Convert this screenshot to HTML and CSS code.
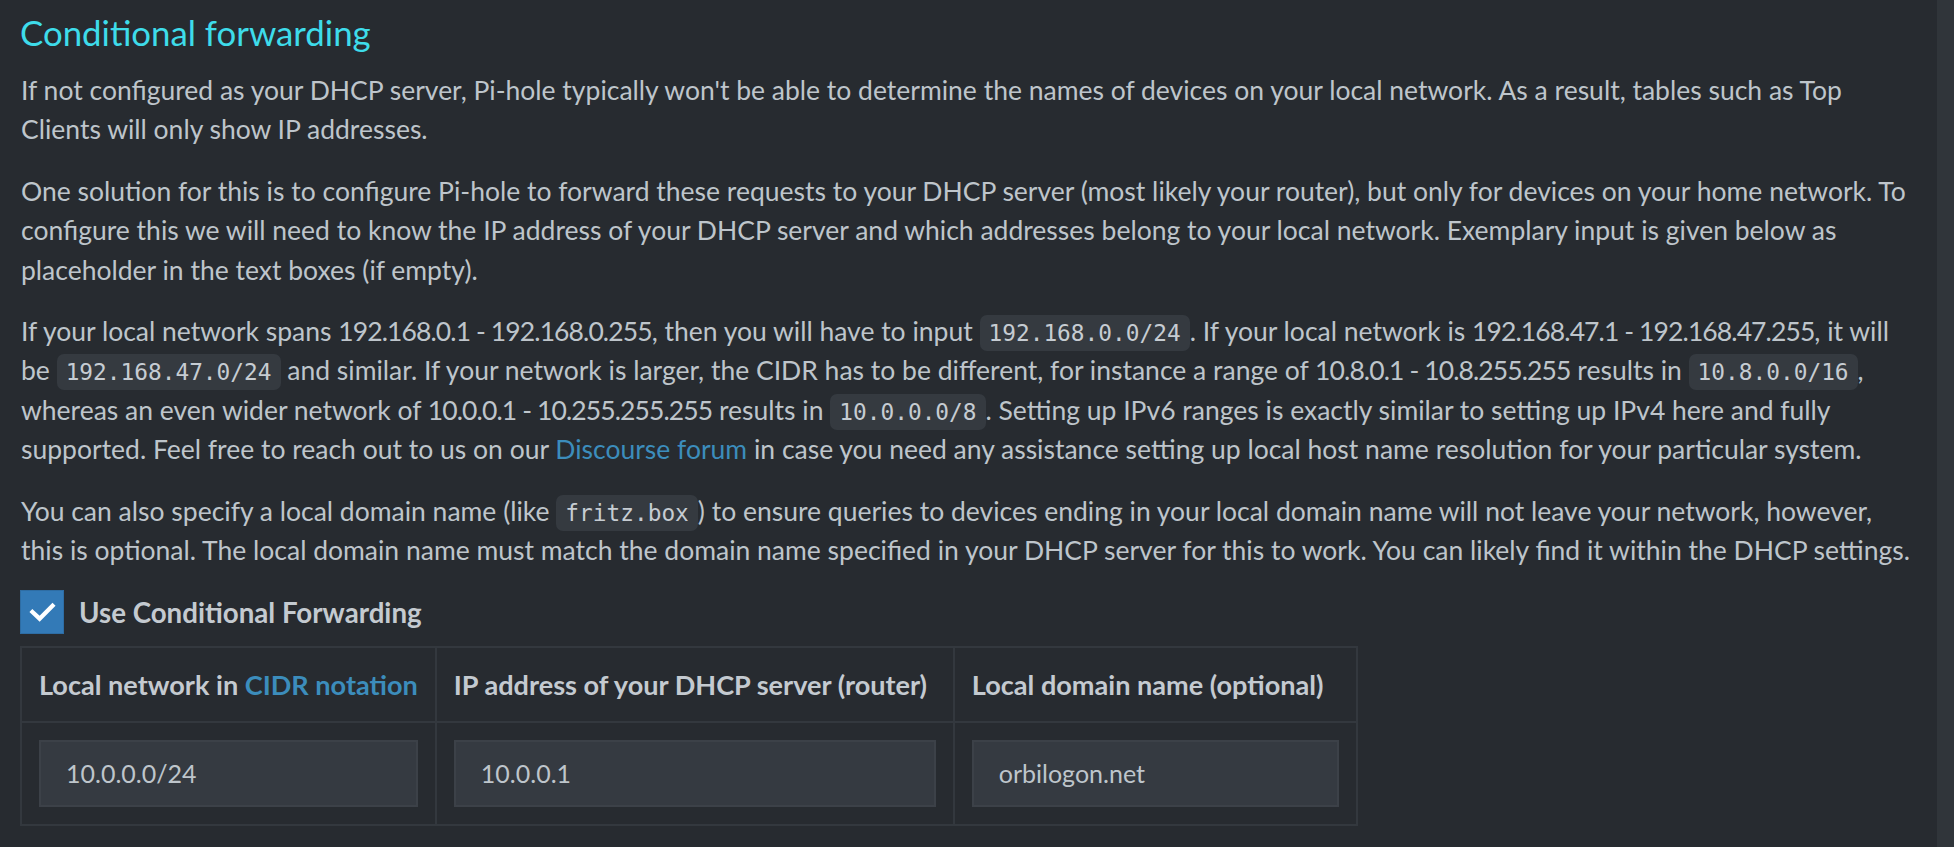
FILE: index.html
```html
<!DOCTYPE html>
<html lang="en">
<head>
<meta charset="utf-8">
<title>Conditional forwarding</title>
<link rel="stylesheet" href="styles.css">
</head>
<body>
<div class="page">
  <main class="content">
    <h3 class="title">Conditional forwarding</h3>
    <p>If not configured as your DHCP server, Pi-hole typically won't be able to determine the names of devices on your local network. As a result, tables such as Top<br>Clients will only show IP addresses.</p>
    <p>One solution for this is to configure Pi-hole to forward these requests to your DHCP server (most likely your router), but only for devices on your home network. To<br>configure this we will need to know the IP address of your DHCP server and which addresses belong to your local network. Exemplary input is given below as<br>placeholder in the text boxes (if empty).</p>
    <p>If your local network spans <span class="num">192.168.0.1 - 192.168.0.255</span>, then you will have to input <code>192.168.0.0/24</code>. If your local network is <span class="num">192.168.47.1 - 192.168.47.255</span>, it will<br>be <code>192.168.47.0/24</code> and similar. If your network is larger, the CIDR has to be different, for instance a range of <span class="num">10.8.0.1 - 10.8.255.255</span> results in <code>10.8.0.0/16</code>,<br>whereas an even wider network of <span class="num">10.0.0.1 - 10.255.255.255</span> results in <code>10.0.0.0/8</code>. Setting up IPv6 ranges is exactly similar to setting up IPv4 here and fully<br>supported. Feel free to reach out to us on our <a href="#" class="link">Discourse forum</a> in case you need any assistance setting up local host name resolution for your particular system.</p>
    <p>You can also specify a local domain name (like <code>fritz.box</code>) to ensure queries to devices ending in your local domain name will not leave your network, however,<br>this is optional. The local domain name must match the domain name specified in your DHCP server for this to work. You can likely find it within the DHCP settings.</p>
    <div class="check-row">
      <span class="checkbox">
        <svg width="44" height="44" viewBox="0 0 44 44"><polyline points="12,22 19.5,29 33,15.5" fill="none" stroke="#ffffff" stroke-width="4.5" stroke-linecap="square"/></svg>
      </span>
      <label class="check-label">Use Conditional Forwarding</label>
    </div>
    <table class="cf-table">
      <colgroup>
        <col class="col-a">
        <col class="col-b">
        <col class="col-c">
      </colgroup>
      <thead>
        <tr>
          <th>Local network in <a href="#" class="link">CIDR notation</a></th>
          <th>IP address of your DHCP server (router)</th>
          <th>Local domain name (optional)</th>
        </tr>
      </thead>
      <tbody>
        <tr>
          <td><div class="field">10.0.0.0/24</div></td>
          <td><div class="field">10.0.0.1</div></td>
          <td><div class="field">orbilogon.net</div></td>
        </tr>
      </tbody>
    </table>
  </main>
  <div class="scrollbar"></div>
</div>
</body>
</html>
```
FILE: styles.css
```css
html, body {
  margin: 0;
  padding: 0;
  height: 100%;
  overflow: hidden;
  background: #272b30;
}

.page {
  display: flex;
  height: 100%;
  font-family: "Lato", "Open Sans", sans-serif;
  color: #bec5cb;
}

.content {
  flex: 1;
  min-width: 0;
  padding: 11px 20px 0 21px;
  font-size: 26.5px;
  line-height: 39.4px;
}

.scrollbar {
  width: 17px;
  flex: none;
  background: #30353a;
}

.title {
  margin: 0 0 16px -1px;
  font-size: 34.8px;
  line-height: 44px;
  font-weight: 400;
  color: #3edcea;
}

.content p {
  margin: 0 0 22px;
  white-space: nowrap;
}

.num {
  letter-spacing: -0.9px;
}

code {
  font-family: "DejaVu Sans Mono", monospace;
  font-size: 22.8px;
  line-height: 1;
  padding: 5px 9px;
  border-radius: 7px;
  background: #353a40;
  color: #c6ccd2;
}

.link {
  color: #3c8dbc;
  text-decoration: none;
}

.check-row {
  display: flex;
  align-items: center;
  gap: 15px;
  margin: -2px 0 12px -1px;
}

.checkbox {
  width: 44px;
  height: 44px;
  box-sizing: border-box;
  background: #337ab7;
  border: 1px solid #2e6da4;
  display: flex;
  align-items: center;
  justify-content: center;
}

.checkbox svg {
  display: block;
}

.check-label {
  font-size: 27.7px;
  font-weight: 700;
  color: #c4cad0;
}

.cf-table {
  border-collapse: collapse;
  table-layout: fixed;
  margin-left: -1px;
}

.col-a { width: 407px; }
.col-b { width: 518px; }
.col-c { width: 403px; }

.cf-table th,
.cf-table td {
  border: 2px solid #33383e;
  padding: 16.5px 17px;
  text-align: left;
  white-space: nowrap;
}

.cf-table td {
  padding: 17px;
}

.cf-table th {
  font-size: 27.1px;
  font-weight: 700;
  color: #c4cad0;
}

.field {
  height: 67px;
  box-sizing: border-box;
  border: 2px solid #3c4148;
  background: #353a41;
  display: flex;
  align-items: center;
  padding: 0 25px;
  font-size: 25px;
  color: #bec5cb;
}
```
